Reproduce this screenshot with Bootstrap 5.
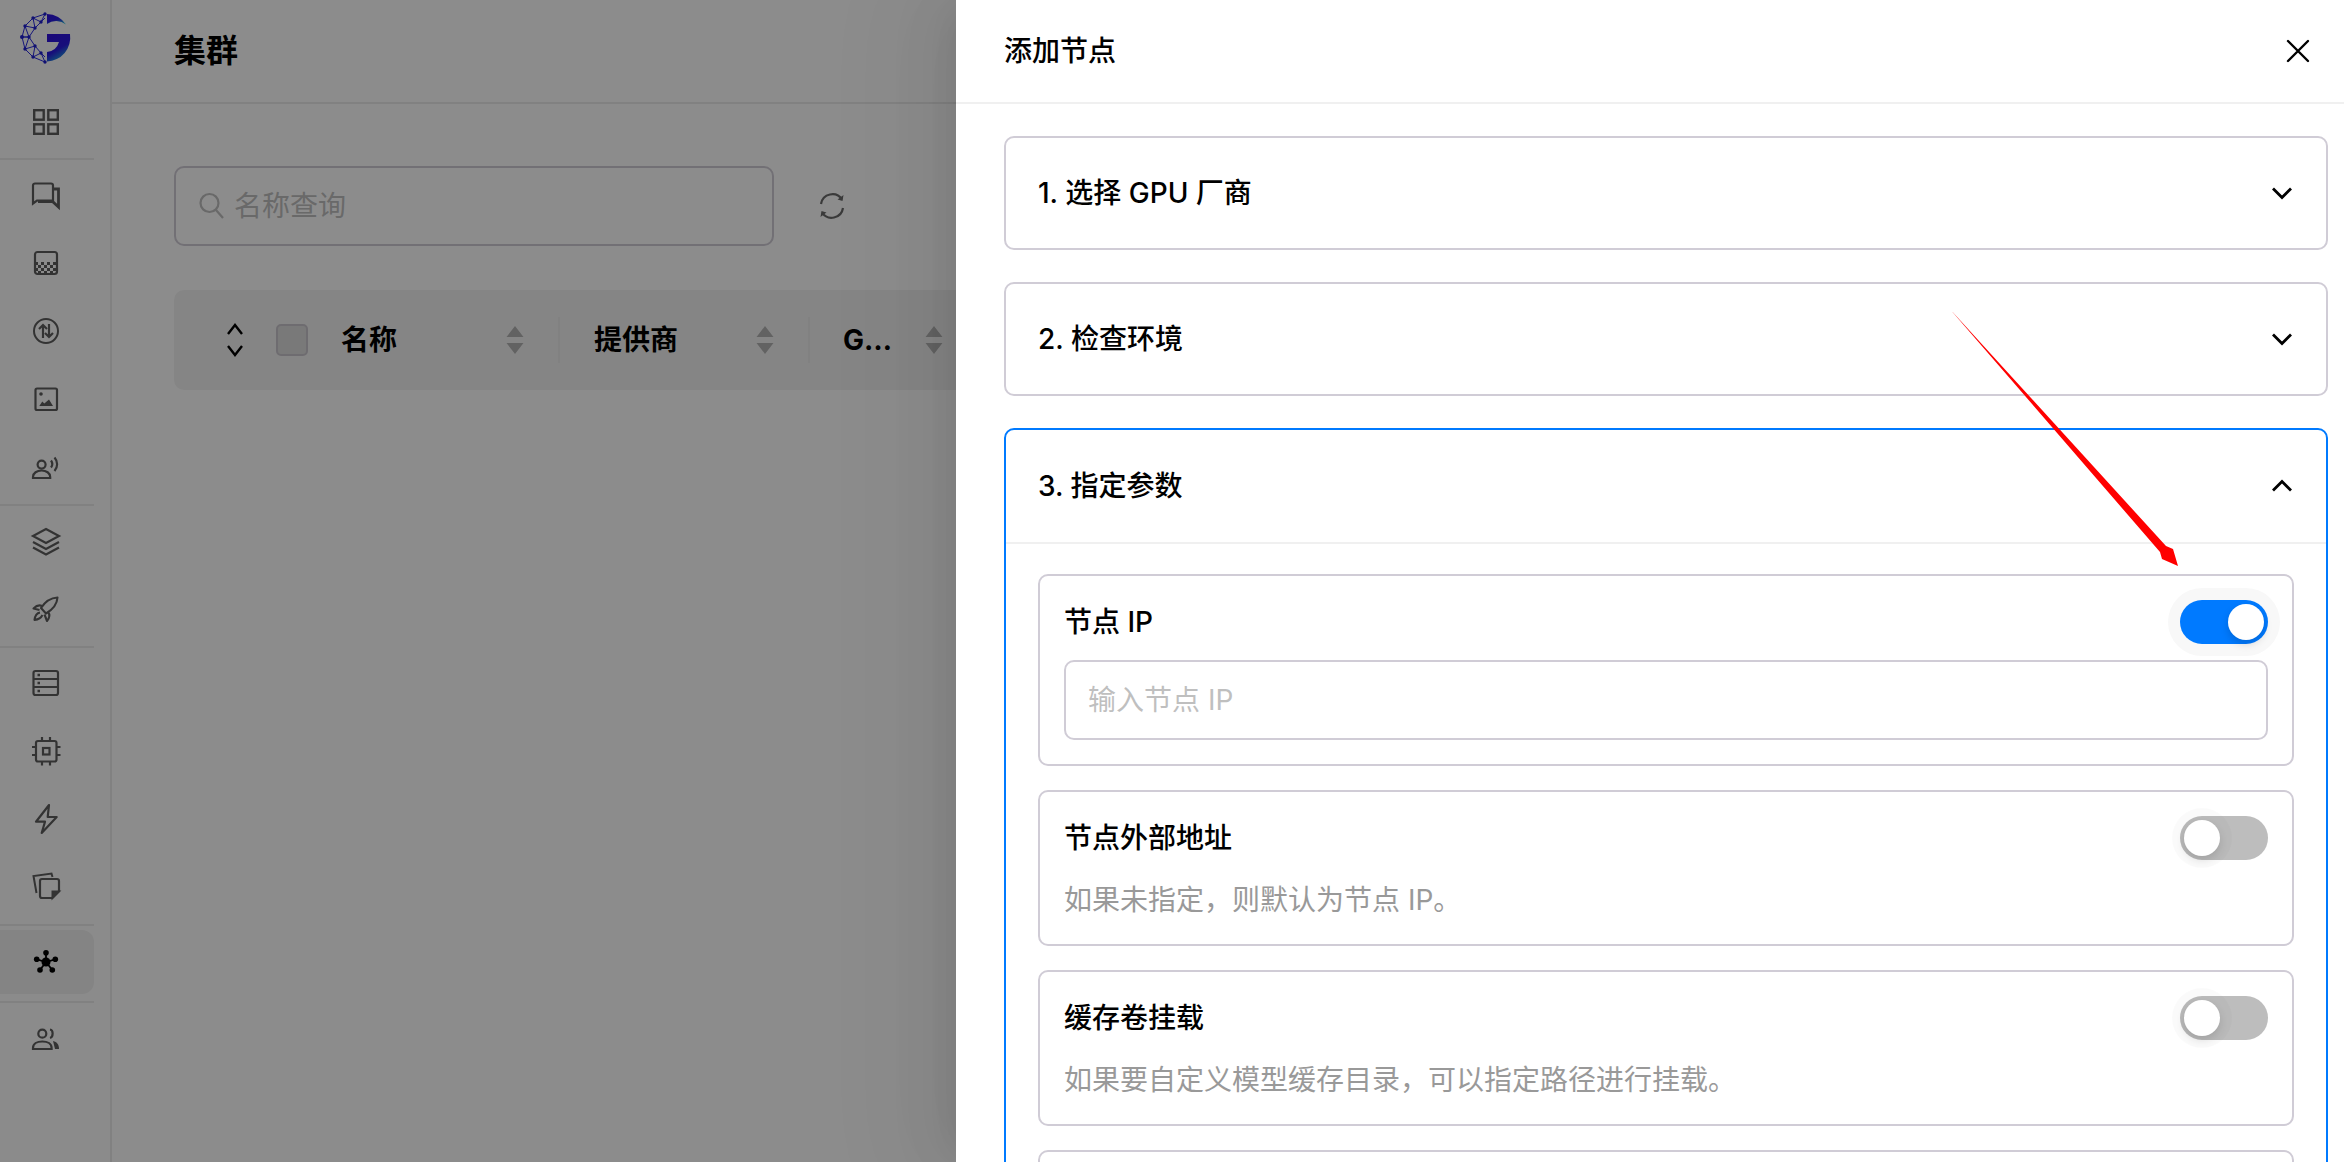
<!DOCTYPE html>
<html lang="zh">
<head>
<meta charset="utf-8">
<title>集群</title>
<link href="https://cdn.jsdelivr.net/npm/bootstrap@5.3.0/dist/css/bootstrap.min.css" rel="stylesheet">
<style>
html,body{height:100%;}
body{margin:0;overflow:hidden;background:#fff;color:#000;font-family:"Inter","Noto Sans CJK SC","Liberation Sans",sans-serif;font-size:28px;}
.app-root{position:relative;width:2344px;height:1162px;overflow:hidden;}
.side-rail{width:112px;height:1162px;flex:none;background:#fefefe;border-right:2px solid #ececec;}
.logo-box{height:87px;padding-left:14px;padding-top:5px;}
.rail-item{width:94px;height:68px;padding-right:2px;color:#5e5e5e;}
.rail-item svg{width:32px;height:32px;display:block;}
.rail-item.active-item{height:64px;margin:3px 0 4px;background:#f0f0f0;border-radius:0 12px 12px 0;color:#000;}
.rail-sep{width:94px;height:2px;margin:3px 0 1px;background:#ebebeb;}
.main-pane{min-width:0;flex:1;}
.page-head{height:104px;border-bottom:2px solid #ececec;padding-left:62px;}
.page-title{font-size:32px;font-weight:700;line-height:44px;}
.main-body{padding:62px 62px 0;}
.search-box{width:600px;height:80px;border:2px solid #d0ccd6;border-radius:10px;padding-left:22px;color:#bfbfbf;font-size:28px;}
.search-box svg{width:28px;height:28px;margin-right:8px;flex:none;}
.search-box .form-control{border:0;padding:0;font-size:28px;box-shadow:none;background:transparent;line-height:40px;}
.form-control::placeholder{color:#bfbfbf;opacity:1;}
.reload-ic{width:30px;height:30px;margin-left:43px;color:#6b6b6b;}
.grid-head{height:100px;margin-top:44px;background:#f3f3f3;border-radius:10px;font-weight:700;white-space:nowrap;}
.head-cell{height:46px;position:relative;padding:0 34px;flex:none;}
.cell-name{width:384px;padding-left:52px;}
.cell-vendor{width:250px;}
.cell-gpu{width:180px;padding-left:33px;padding-right:0;}
.cell-sep{border-left:2px solid #ebebeb;}
.expand-ic{width:18px;height:40px;margin-right:32px;color:#000;}
.fake-check{width:32px;height:32px;border:2px solid #c9c5cc;border-radius:5px;background:#dcdcdc;margin-right:33px;}
.sort-ic{width:18px;height:28px;color:#b3b3b3;flex:none;}
.gpu-text{width:66px;}
.drawer-pane{position:absolute;left:956px;top:0;width:1388px;height:1162px;background:#fff;box-shadow:-12px 0 32px -16px rgba(0,0,0,.08),-18px 0 56px rgba(0,0,0,.05),-24px 0 96px 32px rgba(0,0,0,.03);overflow:hidden;}
.mask-layer{position:absolute;inset:0;background:rgba(0,0,0,.45);}
.drawer-head{height:104px;border-bottom:2px solid #f0f0f0;padding:0 34px 0 48px;}
.drawer-title{font-weight:500;line-height:40px;}
.drawer-x{width:24px;height:24px;color:#000;}
.drawer-body{padding:32px 16px 0 48px;display:flex;flex-direction:column;gap:32px;}
.step-card{border:2px solid #d0ccd6;border-radius:10px;box-shadow:none;background:#fff;}
.step-card.step-open{border-color:#007aff;}
.step-head{height:110px;padding:0 32px;font-weight:500;line-height:40px;}
.step-open .step-head{height:114px;border-bottom:2px solid #f0f0f0;background:transparent;}
.chev-ic{width:24px;height:24px;color:#000;}
.step-inner{padding:30px 32px 0;display:flex;flex-direction:column;gap:24px;}
.param-card{border:2px solid #d0ccd6;border-radius:10px;padding:24px;}
.param-row{height:44px;}
.param-label{font-weight:500;line-height:40px;}
.param-note{margin-top:20px;line-height:40px;color:#999;}
.param-input{display:block;width:100%;height:80px;margin-top:16px;border:2px solid #d0ccd6;border-radius:10px;padding:0 22px;font-size:28px;line-height:40px;color:#000;}
.tg-switch{position:relative;display:block;width:88px;height:44px;border-radius:22px;background:#bdbdbd;flex:none;}
.tg-knob{position:absolute;top:4px;left:4px;width:36px;height:36px;border-radius:50%;background:#fff;box-shadow:0 4px 8px rgba(0,0,0,.12),0 0 0 12px rgba(0,0,0,.02);}
.tg-switch.tg-on{background:#007aff;box-shadow:0 0 0 12px #f8f8f8;}
.tg-on .tg-knob{left:48px;box-shadow:0 4px 8px rgba(0,0,0,.15);}
.red-arrow{position:absolute;left:1940px;top:300px;width:250px;height:280px;pointer-events:none;}
</style>
</head>
<body>
<div class="app-root">
  <div class="d-flex">
    <nav class="side-rail d-flex flex-column">
      <div class="logo-box">
        <svg width="64" height="64" viewBox="0 0 64 64" fill="none">
          <defs><linearGradient id="gfill" x1="0.2" y1="0" x2="0.7" y2="1"><stop offset="0" stop-color="#3010dc"/><stop offset=".55" stop-color="#2a1ae0"/><stop offset="1" stop-color="#1cc0d8"/></linearGradient></defs>
          <path fill="url(#gfill)" d="M33 9A24.500 24.500 0 0 1 52 19.500A16 16 0 0 0 33 19Z"/>
          <path fill="url(#gfill)" d="M33 29H56A24 24 0 0 1 33 56.500V47A14 14 0 0 0 45 37H33Z"/>
          <g stroke="#2a2ae0" stroke-width="1">
            <path d="M31 9 19 13 11 21 8 32 11 44 19 52 31 57M31 9 27 17 19 13 21 23 11 21 15 32 8 32 15 32 11 44 21 41 19 52 27 48 31 57M27 17 21 23 15 32 21 41 27 48M27 17 31 13M27 48 31 52"/>
          </g>
          <g fill="#2020d0"><circle cx="31" cy="9" r="1.700"/><circle cx="19" cy="13" r="1.700"/><circle cx="11" cy="21" r="1.700"/><circle cx="8" cy="32" r="2"/><circle cx="11" cy="44" r="1.700"/><circle cx="19" cy="52" r="1.700"/><circle cx="31" cy="57" r="1.700"/><circle cx="27" cy="17" r="1.700"/><circle cx="21" cy="23" r="1.700"/><circle cx="15" cy="32" r="1.700"/><circle cx="21" cy="41" r="1.700"/><circle cx="27" cy="48" r="1.700"/></g>
        </svg>
      </div>
      <div class="rail-item d-flex align-items-center justify-content-center"><svg viewBox="0 0 32 32" fill="none" stroke="currentColor" stroke-width="2.400"><rect x="4.200" y="5.200" width="9.500" height="9.500"/><rect x="18.300" y="5.200" width="9.500" height="9.500"/><rect x="4.200" y="19.300" width="9.500" height="9.500"/><rect x="18.300" y="19.300" width="9.500" height="9.500"/></svg></div>
      <div class="rail-sep"></div>
      <div class="rail-item d-flex align-items-center justify-content-center"><svg viewBox="0 0 32 32" fill="none" stroke="currentColor" stroke-width="2.200"><path d="M5 4.500H21a2 2 0 0 1 2 2V21.500H7L3 24.500V6.500a2 2 0 0 1 2-2z"/><path d="M24 10h4.500v18l-6-5.500H8" stroke-width="2.800"/></svg></div>
      <div class="rail-item d-flex align-items-center justify-content-center"><svg viewBox="0 0 32 32" fill="none"><defs><pattern id="dith" width="6" height="6" patternUnits="userSpaceOnUse" patternTransform="translate(5 15)"><rect width="3" height="3" fill="currentColor"/><rect x="3" y="3" width="3" height="3" fill="currentColor"/></pattern></defs><rect x="5" y="15" width="21" height="11" fill="url(#dith)"/><rect x="5" y="5" width="22" height="22" rx="2.500" stroke="currentColor" stroke-width="2.200"/></svg></div>
      <div class="rail-item d-flex align-items-center justify-content-center"><svg viewBox="0 0 32 32" fill="none" stroke="currentColor" stroke-width="2"><circle cx="16" cy="16" r="12"/><path d="M13 23V10M9 14l4-4 4 4M19 9v13M15 18l4 4 4-4" stroke-width="2.200"/></svg></div>
      <div class="rail-item d-flex align-items-center justify-content-center"><svg viewBox="0 0 32 32" fill="none"><rect x="5.500" y="5.500" width="21.500" height="21.500" rx="1.500" stroke="currentColor" stroke-width="2.200"/><circle cx="11" cy="11" r="1.800" fill="currentColor"/><path fill="currentColor" d="M9.300 23 12.300 18.500 14.300 20.500 19 16.500 23 23Z"/></svg></div>
      <div class="rail-item d-flex align-items-center justify-content-center"><svg viewBox="0 0 32 32" fill="none" stroke="currentColor" stroke-width="2.200"><circle cx="11.600" cy="13.600" r="4"/><path d="M3 27v-1c0-4 4-6.500 8.600-6.500s8.600 2.500 8.600 6.500v1z"/><path d="M24.500 6.500c3.500 4 3.500 9.500 0 13.500M21 9.500c1.600 2.200 1.600 5 0 7"/></svg></div>
      <div class="rail-sep"></div>
      <div class="rail-item d-flex align-items-center justify-content-center"><svg viewBox="0 0 32 32" fill="none" stroke="currentColor" stroke-width="2.200"><path d="M16 4 29 11 16 18 3 11Z"/><path d="M3 17l13 7 13-7M3 22.500l13 7 13-7"/></svg></div>
      <div class="rail-item d-flex align-items-center justify-content-center"><svg viewBox="0 0 32 32" fill="none" stroke="currentColor" stroke-width="2.100" stroke-linejoin="round"><path d="M27.500 4.500C20 5 14.500 9.500 11 15l5 5.500c6-3.500 11-8.500 11.500-16z"/><path d="M12 13c-3-1.500-6 0-8.500 2.500L9.500 17M18 19c2 2.500 1.500 6-1 9l-2.500-6.500"/><path d="M10 19.500c-3 .5-5 3.500-5.500 7.500 3.500-.5 6.500-2 8-5"/></svg></div>
      <div class="rail-sep"></div>
      <div class="rail-item d-flex align-items-center justify-content-center"><svg viewBox="0 0 32 32" fill="none" stroke="currentColor" stroke-width="2.200"><rect x="3.500" y="4" width="24.500" height="24" rx="2"/><path d="M3.500 12h24.500M3.500 20h24.500"/><path d="M7.500 8h2.500M7.500 16h2.500M7.500 24h2.500" stroke-width="2.500"/></svg></div>
      <div class="rail-item d-flex align-items-center justify-content-center"><svg viewBox="0 0 32 32" fill="none" stroke="currentColor" stroke-width="2.200"><rect x="6" y="6" width="20.500" height="20.500" rx="2"/><rect x="13" y="13" width="6.500" height="6.500" stroke-width="2.200"/><path d="M12 2v4M20 2v4M12 26.500v4M20 26.500v4M2 12h4M2 20h4M26.500 12h4M26.500 20h4"/></svg></div>
      <div class="rail-item d-flex align-items-center justify-content-center"><svg viewBox="0 0 32 32" fill="none" stroke="currentColor" stroke-width="2.200" stroke-linejoin="round"><path d="M19 2 6 18.700h9L11.700 30 26.700 14H17.700Z"/></svg></div>
      <div class="rail-item d-flex align-items-center justify-content-center"><svg viewBox="0 0 32 32" fill="none" stroke="currentColor" stroke-width="2"><path d="M6.500 22 3.500 5 21.500 2.500 22.500 6"/><path d="M12 8H27a2 2 0 0 1 2 2v10l-7 7H12a2 2 0 0 1-2-2V10a2 2 0 0 1 2-2z" stroke-width="2.200"/><path d="M29 20.500h-6.500V27Z" fill="currentColor"/></svg></div>
      <div class="rail-sep"></div>
      <div class="rail-item active-item d-flex align-items-center justify-content-center"><svg viewBox="0 0 32 32" fill="currentColor" stroke="currentColor" stroke-width="1.800"><path d="M16 16V6.700M16 16 25.300 13.300M16 16 22.300 24M16 16 10 24M16 16 6.700 13.300"/><circle cx="16" cy="16" r="4.500" stroke="none"/><circle cx="16" cy="6.700" r="2.800" stroke="none"/><circle cx="25.300" cy="13.300" r="2.800" stroke="none"/><circle cx="22.300" cy="24" r="2.800" stroke="none"/><circle cx="10" cy="24" r="2.800" stroke="none"/><circle cx="6.700" cy="13.300" r="2.800" stroke="none"/></svg></div>
      <div class="rail-sep"></div>
      <div class="rail-item d-flex align-items-center justify-content-center"><svg viewBox="0 0 32 32" fill="none" stroke="currentColor" stroke-width="2.200"><circle cx="12.300" cy="11.700" r="4"/><path d="M3 27v-1c0-4 4-6.500 9.300-6.500s9.300 2.500 9.300 6.500v1z"/><path d="M20 7.500c3.500 .5 3.500 7.500 0 8.500"/><path d="M23 19c4 1 6 3.500 6 8h-4z" fill="currentColor" stroke="none"/></svg></div>
    </nav>
    <main class="main-pane">
      <div class="page-head d-flex align-items-center"><div class="page-title">集群</div></div>
      <div class="main-body">
        <div class="d-flex align-items-center">
          <label class="search-box d-flex align-items-center m-0">
            <svg viewBox="0 0 28 28" fill="none" stroke="currentColor" stroke-width="2.200"><circle cx="11.500" cy="11" r="9"/><path d="M18 18l7 8"/></svg>
            <input class="form-control" type="text" placeholder="名称查询">
          </label>
          <svg class="reload-ic" viewBox="0 0 30 30" fill="none" stroke="currentColor" stroke-width="2.200"><path d="M4 13A11.500 11.500 0 0 1 25 8.500"/><path d="M26 17A11.500 11.500 0 0 1 5 21.500"/><path d="M26.500 3v7h-7M3.500 27v-7h7" stroke="none"/><path d="M26.500 4.500v5.500h-5.500M3.500 25.500V20h5.500" stroke-width="0"/><path d="M26.500 4 25.500 10 20.500 8.500Z M3.500 26 4.500 20 9.500 21.500Z" fill="currentColor" stroke="none"/></svg>
        </div>
        <div class="grid-head d-flex align-items-center">
          <div class="head-cell cell-name d-flex align-items-center">
            <svg class="expand-ic" viewBox="0 0 18 40" fill="none" stroke="currentColor" stroke-width="2.400"><path d="M2 14 9 5l7 9M2 26l7 9 7-9"/></svg>
            <span class="fake-check"></span>
            <span>名称</span>
            <svg class="sort-ic ms-auto" viewBox="0 0 18 28" fill="currentColor"><path d="M9 0 17.500 11H.5ZM.5 17H17.500L9 28Z"/></svg>
          </div>
          <div class="head-cell cell-vendor cell-sep d-flex align-items-center">
            <span>提供商</span>
            <svg class="sort-ic ms-auto" viewBox="0 0 18 28" fill="currentColor"><path d="M9 0 17.500 11H.5ZM.5 17H17.500L9 28Z"/></svg>
          </div>
          <div class="head-cell cell-gpu cell-sep d-flex align-items-center">
            <span class="gpu-text text-truncate">GPU 厂商</span>
            <svg class="sort-ic ms-3" viewBox="0 0 18 28" fill="currentColor"><path d="M9 0 17.500 11H.5ZM.5 17H17.500L9 28Z"/></svg>
          </div>
        </div>
      </div>
    </main>
  </div>
  <div class="mask-layer"></div>
  <aside class="drawer-pane">
    <div class="drawer-head d-flex align-items-center justify-content-between">
      <div class="drawer-title">添加节点</div>
      <svg class="drawer-x" viewBox="0 0 24 24" fill="none" stroke="currentColor" stroke-width="2.400" stroke-linecap="round"><path d="M2 2 22 22M22 2 2 22"/></svg>
    </div>
    <div class="drawer-body">
      <div class="card step-card">
        <div class="step-head d-flex align-items-center justify-content-between"><span>1. 选择 GPU 厂商</span><svg class="chev-ic" viewBox="0 0 24 24" fill="none" stroke="currentColor" stroke-width="2.800"><path d="M3 7.500 12 16.500 21 7.500"/></svg></div>
      </div>
      <div class="card step-card">
        <div class="step-head d-flex align-items-center justify-content-between"><span>2. 检查环境</span><svg class="chev-ic" viewBox="0 0 24 24" fill="none" stroke="currentColor" stroke-width="2.800"><path d="M3 7.500 12 16.500 21 7.500"/></svg></div>
      </div>
      <div class="card step-card step-open">
        <div class="step-head d-flex align-items-center justify-content-between"><span>3. 指定参数</span><svg class="chev-ic" viewBox="0 0 24 24" fill="none" stroke="currentColor" stroke-width="2.800"><path d="M3 16.500 12 7.500 21 16.500"/></svg></div>
        <div class="step-inner">
          <div class="param-card">
            <div class="param-row d-flex align-items-center justify-content-between"><span class="param-label">节点 IP</span><span class="tg-switch tg-on"><span class="tg-knob"></span></span></div>
            <input class="form-control param-input" type="text" placeholder="输入节点 IP">
          </div>
          <div class="param-card">
            <div class="param-row d-flex align-items-center justify-content-between"><span class="param-label">节点外部地址</span><span class="tg-switch"><span class="tg-knob"></span></span></div>
            <div class="param-note">如果未指定，则默认为节点 IP。</div>
          </div>
          <div class="param-card">
            <div class="param-row d-flex align-items-center justify-content-between"><span class="param-label">缓存卷挂载</span><span class="tg-switch"><span class="tg-knob"></span></span></div>
            <div class="param-note">如果要自定义模型缓存目录，可以指定路径进行挂载。</div>
          </div>
          <div class="param-card">
            <div class="param-row"></div>
          </div>
        </div>
      </div>
    </div>
  </aside>
  <svg class="red-arrow" viewBox="1940 300 250 280"><polygon fill="#ff0000" points="1952,311.500 1952.800,312.200 2166,546 2173,549 2178,566 2162,559 2160,552"/></svg>
</div>
<script src="https://cdn.jsdelivr.net/npm/bootstrap@5.3.0/dist/js/bootstrap.bundle.min.js"></script>
</body>
</html>
